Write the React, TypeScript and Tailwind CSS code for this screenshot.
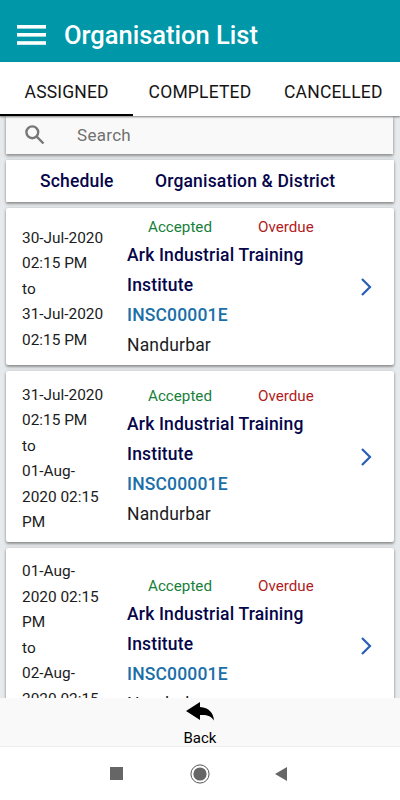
type Schedule = {
  dates: string[];
};

const schedules: Schedule[] = [
  { dates: ["30-Jul-2020", "02:15 PM", "to", "31-Jul-2020", "02:15 PM"] },
  { dates: ["31-Jul-2020", "02:15 PM", "to", "01-Aug-", "2020 02:15", "PM"] },
  {
    dates: ["01-Aug-", "2020 02:15", "PM", "to", "02-Aug-", "2020 02:15", "PM"],
  },
];

const cardShadow =
  "shadow-[0_2px_3px_rgba(0,0,0,0.36),0_0_3px_rgba(0,0,0,0.16)]";

function Header() {
  return (
    <header className="h-[62px] shrink-0 bg-[#0097a9] flex items-center pt-2 pl-[17px]">
      <svg className="w-[29px] h-5" viewBox="0 0 29 20" fill="#fff">
        <rect width="29" height="3.6" />
        <rect y="8" width="29" height="3.6" />
        <rect y="16.2" width="29" height="3.6" />
      </svg>
      <h1 className="ml-[18px] text-[25.5px] leading-8 font-medium text-white whitespace-nowrap">
        Organisation List
      </h1>
    </header>
  );
}

function Tabs() {
  return (
    <nav className="relative z-10 h-[54px] shrink-0 bg-white grid grid-cols-3 text-[17.5px] tracking-[0.18px] text-[#151515] shadow-[0_1px_2px_rgba(0,0,0,0.5)]">
      <button className="border-b-2 border-black pt-[9px]">ASSIGNED</button>
      <button className="border-b-2 border-transparent pt-[9px]">
        COMPLETED
      </button>
      <button className="border-b-2 border-transparent pt-[9px]">
        CANCELLED
      </button>
    </nav>
  );
}

function ScheduleCard({ dates }: Schedule) {
  return (
    <div
      className={`flex items-center shrink-0 min-h-[157px] bg-white rounded-[2px] pl-4 pt-[10px] pb-[7px] ${cardShadow}`}
    >
      <div className="w-[105px] pt-[1.5px] -mb-[1.5px] text-[15.4px] leading-[25.6px] text-[#1c1c1c] whitespace-nowrap">
        {dates.map((line, index) => (
          <p key={index}>{line}</p>
        ))}
      </div>
      <div className="w-[200px] -mt-[5px] -mb-[2px] whitespace-nowrap text-[17.5px] leading-[30px] tracking-[0.17px]">
        <div className="flex pl-[21px] text-[15.2px] leading-[26px] tracking-normal">
          <span className="w-[110px] text-[#17803a]">Accepted</span>
          <span className="text-[#b01c22]">Overdue</span>
        </div>
        <p className="font-medium text-[#05054a]">Ark Industrial Training</p>
        <p className="font-medium text-[#05054a]">Institute</p>
        <p className="font-medium text-[#1a6fa8]">INSC00001E</p>
        <p className="text-[#1c1c1c]">Nandurbar</p>
      </div>
      <svg
        className="ml-[33px] -mt-[2px] w-[12px] h-[20px]"
        viewBox="0 0 12 20"
        fill="none"
        stroke="#2a5db5"
        strokeWidth="2.2"
      >
        <path d="M2 2 L10 10 L2 18" />
      </svg>
    </div>
  );
}

function BackBar() {
  return (
    <div className="h-[49px] shrink-0 bg-[#f9f9f9] flex flex-col items-center border-b border-[#eeeeee] text-black">
      <svg className="mt-[4px] w-[28px] h-[19px] shrink-0" viewBox="0 0 28 19">
        <path d="M0 9 L14 0 V5 C23 5.5 27.5 11 28 18.5 C25 14 21 12.5 14 13 V18 Z" />
      </svg>
      <span className="mt-[8px] shrink-0 text-[15px] leading-[18px]">Back</span>
    </div>
  );
}

function SystemNav() {
  return (
    <div className="h-[53px] shrink-0 flex items-center pl-[110px]">
      <span className="w-[13px] h-[13px] bg-[#666]" />
      <svg className="ml-[67px] w-5 h-5" viewBox="0 0 20 20">
        <circle cx="10" cy="10" r="9.1" fill="none" stroke="#555" />
        <circle cx="10" cy="10" r="6.6" fill="#666" />
      </svg>
      <svg className="ml-[65px] w-[12px] h-[14px]" viewBox="0 0 12 14">
        <path d="M0 7 L12 0 V14 Z" fill="#666" />
      </svg>
    </div>
  );
}

export default function App() {
  return (
    <div className="w-[400px] h-[800px] flex flex-col overflow-hidden bg-white font-['Roboto',sans-serif]">
      <Header />
      <Tabs />
      <main className="flex-1 min-h-0 overflow-hidden bg-[#e7eaec] flex flex-col gap-[6px] px-[6px]">
        <div
          className={`h-[38px] shrink-0 mr-[1px] bg-[#f9f9f9] flex items-center pl-[19px] ${cardShadow}`}
        >
          <svg
            className="w-5 h-5"
            viewBox="0 0 20 20"
            fill="none"
            stroke="#777"
            strokeWidth="2.4"
          >
            <circle cx="7.3" cy="7.3" r="5.9" />
            <path d="M11.7 11.7 L18.5 18.5" />
          </svg>
          <span className="ml-[32px] pt-[2px] text-[17px] tracking-[0.3px] text-[#707070]">
            Search
          </span>
        </div>
        <div
          className={`h-[42px] shrink-0 bg-white rounded-[1px] flex items-center pl-[34px] text-[17.5px] tracking-[0.17px] font-medium text-[#05054a] whitespace-nowrap ${cardShadow}`}
        >
          <span className="w-[115px]">Schedule</span>
          <span>Organisation &amp; District</span>
        </div>
        {schedules.map((item, index) => (
          <ScheduleCard key={index} dates={item.dates} />
        ))}
      </main>
      <BackBar />
      <SystemNav />
    </div>
  );
}
